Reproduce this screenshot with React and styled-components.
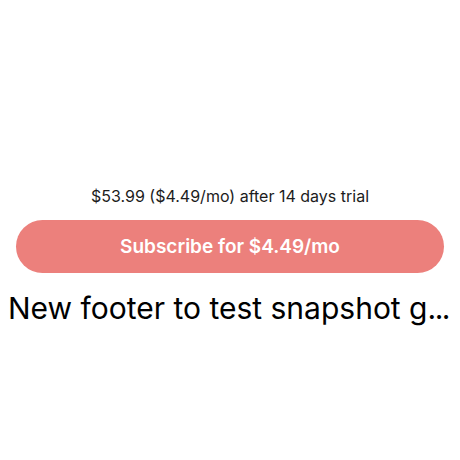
import React from 'react';
import styled, { createGlobalStyle } from 'styled-components';

const GlobalStyle = createGlobalStyle`
  html, body {
    margin: 0;
    padding: 0;
    background: #ffffff;
    font-family: Inter, "Noto Sans", sans-serif;
  }
`;

const Page = styled.div`
  width: 460px;
  height: 460px;
  box-sizing: border-box;
  padding-top: 186px;
  display: flex;
  flex-direction: column;
  align-items: stretch;
`;

const Caption = styled.div`
  text-align: center;
  font-size: 16px;
  line-height: 20px;
  color: #1c1c1c;
`;

const SubscribeButton = styled.button`
  margin: 14px 16px 0;
  height: 53px;
  border: none;
  border-radius: 27px;
  background: #ec807c;
  color: #ffffff;
  font-family: inherit;
  font-size: 19px;
  font-weight: 600;
  cursor: pointer;
`;

const Footer = styled.div`
  margin: 15px 8px 0;
  font-size: 30px;
  line-height: 40px;
  color: #000000;
  white-space: nowrap;
`;

const Dots = styled.span`
  letter-spacing: -1.5px;
`;

export default function App() {
  return (
    <Page>
      <GlobalStyle />
      <Caption>$53.99 ($4.49/mo) after 14 days trial</Caption>
      <SubscribeButton>Subscribe for $4.49/mo</SubscribeButton>
      <Footer>
        New footer to test snapshot g<Dots>...</Dots>
      </Footer>
    </Page>
  );
}
